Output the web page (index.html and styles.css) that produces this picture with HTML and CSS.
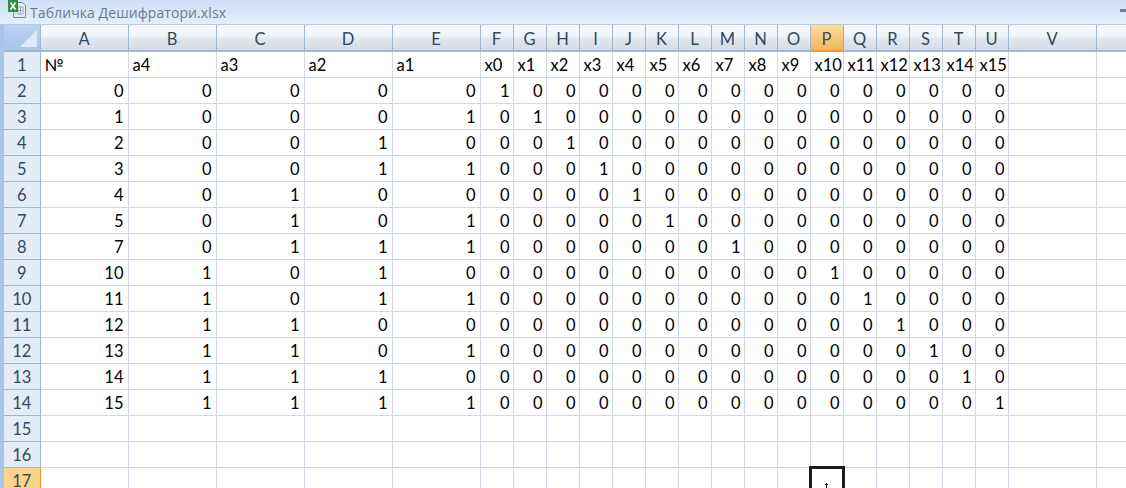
FILE: index.html
```html
<!DOCTYPE html>
<html lang="en">
<head>
    <meta charset="UTF-8">
    <title>Табличка Дешифратори.xlsx</title>
    <link rel="stylesheet" href="styles.css">
</head>
<body>
    <div class="titlebar">
        <svg class="xl-icon" width="20" height="20" viewBox="0 0 20 20">
            <path d="M6.5 2.5h9l3 3v12h-12z" fill="#e4ecf4" stroke="#6f8aa3"/>
            <path d="M11 7h5v7h-5zM11 10.500h5M13.500 7v7" fill="#fff" stroke="#8fa6bb"/>
            <path d="M5.500 13.500h8" stroke="#b9c7d4"/>
            <rect x="1" y="0" width="10" height="12" fill="#2f9140"/>
            <path d="M3.500 2.500l5 7M8.500 2.500l-5 7" stroke="#f2fff2" stroke-width="1.700"/>
        </svg>
        <span class="doc-name">Табличка Дешифратори.xlsx</span>
        <span class="min-btn"></span>
    </div>
    <div class="sheet-wrap">
    <table class="sheet">
        <colgroup>
            <col class="c-hdr">
            <col class="c-wide"><col class="c-wide"><col class="c-wide"><col class="c-wide"><col class="c-wide">
            <col class="c-x"><col class="c-x"><col class="c-x"><col class="c-x"><col class="c-x"><col class="c-x"><col class="c-x"><col class="c-x"><col class="c-x"><col class="c-x"><col class="c-x"><col class="c-x"><col class="c-x"><col class="c-x"><col class="c-x"><col class="c-x">
            <col class="c-wide"><col class="c-last">
        </colgroup>
        <tr class="col-heads">
            <th class="corner"><span class="corner-mark"></span></th>
            <th>A</th><th>B</th><th>C</th><th>D</th><th>E</th><th>F</th><th>G</th><th>H</th><th>I</th><th>J</th><th>K</th><th>L</th><th>M</th><th>N</th><th>O</th><th class="active">P</th><th>Q</th><th>R</th><th>S</th><th>T</th><th>U</th><th>V</th><th></th>
        </tr>
        <tr class="labels">
            <th>1</th>
            <td>№</td><td>a4</td><td>a3</td><td>a2</td><td>a1</td><td>x0</td><td>x1</td><td>x2</td><td>x3</td><td>x4</td><td>x5</td><td>x6</td><td>x7</td><td>x8</td><td>x9</td><td>x10</td><td>x11</td><td>x12</td><td>x13</td><td>x14</td><td>x15</td><td></td><td></td>
        </tr>
        <tr><th>2</th><td>0</td><td>0</td><td>0</td><td>0</td><td>0</td><td>1</td><td>0</td><td>0</td><td>0</td><td>0</td><td>0</td><td>0</td><td>0</td><td>0</td><td>0</td><td>0</td><td>0</td><td>0</td><td>0</td><td>0</td><td>0</td><td></td><td></td></tr>
        <tr><th>3</th><td>1</td><td>0</td><td>0</td><td>0</td><td>1</td><td>0</td><td>1</td><td>0</td><td>0</td><td>0</td><td>0</td><td>0</td><td>0</td><td>0</td><td>0</td><td>0</td><td>0</td><td>0</td><td>0</td><td>0</td><td>0</td><td></td><td></td></tr>
        <tr><th>4</th><td>2</td><td>0</td><td>0</td><td>1</td><td>0</td><td>0</td><td>0</td><td>1</td><td>0</td><td>0</td><td>0</td><td>0</td><td>0</td><td>0</td><td>0</td><td>0</td><td>0</td><td>0</td><td>0</td><td>0</td><td>0</td><td></td><td></td></tr>
        <tr><th>5</th><td>3</td><td>0</td><td>0</td><td>1</td><td>1</td><td>0</td><td>0</td><td>0</td><td>1</td><td>0</td><td>0</td><td>0</td><td>0</td><td>0</td><td>0</td><td>0</td><td>0</td><td>0</td><td>0</td><td>0</td><td>0</td><td></td><td></td></tr>
        <tr><th>6</th><td>4</td><td>0</td><td>1</td><td>0</td><td>0</td><td>0</td><td>0</td><td>0</td><td>0</td><td>1</td><td>0</td><td>0</td><td>0</td><td>0</td><td>0</td><td>0</td><td>0</td><td>0</td><td>0</td><td>0</td><td>0</td><td></td><td></td></tr>
        <tr><th>7</th><td>5</td><td>0</td><td>1</td><td>0</td><td>1</td><td>0</td><td>0</td><td>0</td><td>0</td><td>0</td><td>1</td><td>0</td><td>0</td><td>0</td><td>0</td><td>0</td><td>0</td><td>0</td><td>0</td><td>0</td><td>0</td><td></td><td></td></tr>
        <tr><th>8</th><td>7</td><td>0</td><td>1</td><td>1</td><td>1</td><td>0</td><td>0</td><td>0</td><td>0</td><td>0</td><td>0</td><td>0</td><td>1</td><td>0</td><td>0</td><td>0</td><td>0</td><td>0</td><td>0</td><td>0</td><td>0</td><td></td><td></td></tr>
        <tr><th>9</th><td>10</td><td>1</td><td>0</td><td>1</td><td>0</td><td>0</td><td>0</td><td>0</td><td>0</td><td>0</td><td>0</td><td>0</td><td>0</td><td>0</td><td>0</td><td>1</td><td>0</td><td>0</td><td>0</td><td>0</td><td>0</td><td></td><td></td></tr>
        <tr><th>10</th><td>11</td><td>1</td><td>0</td><td>1</td><td>1</td><td>0</td><td>0</td><td>0</td><td>0</td><td>0</td><td>0</td><td>0</td><td>0</td><td>0</td><td>0</td><td>0</td><td>1</td><td>0</td><td>0</td><td>0</td><td>0</td><td></td><td></td></tr>
        <tr><th>11</th><td>12</td><td>1</td><td>1</td><td>0</td><td>0</td><td>0</td><td>0</td><td>0</td><td>0</td><td>0</td><td>0</td><td>0</td><td>0</td><td>0</td><td>0</td><td>0</td><td>0</td><td>1</td><td>0</td><td>0</td><td>0</td><td></td><td></td></tr>
        <tr><th>12</th><td>13</td><td>1</td><td>1</td><td>0</td><td>1</td><td>0</td><td>0</td><td>0</td><td>0</td><td>0</td><td>0</td><td>0</td><td>0</td><td>0</td><td>0</td><td>0</td><td>0</td><td>0</td><td>1</td><td>0</td><td>0</td><td></td><td></td></tr>
        <tr><th>13</th><td>14</td><td>1</td><td>1</td><td>1</td><td>0</td><td>0</td><td>0</td><td>0</td><td>0</td><td>0</td><td>0</td><td>0</td><td>0</td><td>0</td><td>0</td><td>0</td><td>0</td><td>0</td><td>0</td><td>1</td><td>0</td><td></td><td></td></tr>
        <tr><th>14</th><td>15</td><td>1</td><td>1</td><td>1</td><td>1</td><td>0</td><td>0</td><td>0</td><td>0</td><td>0</td><td>0</td><td>0</td><td>0</td><td>0</td><td>0</td><td>0</td><td>0</td><td>0</td><td>0</td><td>0</td><td>1</td><td></td><td></td></tr>
        <tr><th>15</th><td></td><td></td><td></td><td></td><td></td><td></td><td></td><td></td><td></td><td></td><td></td><td></td><td></td><td></td><td></td><td></td><td></td><td></td><td></td><td></td><td></td><td></td><td></td></tr>
        <tr><th>16</th><td></td><td></td><td></td><td></td><td></td><td></td><td></td><td></td><td></td><td></td><td></td><td></td><td></td><td></td><td></td><td></td><td></td><td></td><td></td><td></td><td></td><td></td><td></td></tr>
        <tr><th class="active">17</th><td></td><td></td><td></td><td></td><td></td><td></td><td></td><td></td><td></td><td></td><td></td><td></td><td></td><td></td><td></td><td></td><td></td><td></td><td></td><td></td><td></td><td></td><td></td></tr>
    </table>
    </div>
    <div class="cell-cursor"><span class="cursor-cross"></span></div>
</body>
</html>
```
FILE: styles.css
```css
html, body { margin: 0; height: 100%; overflow: hidden; }
body {
    width: 1126px;
    height: 488px;
    position: relative;
    background: #fff;
    font-family: "Open Sans", "Noto Sans", sans-serif;
}

.titlebar {
    height: 24px;
    display: flex;
    align-items: center;
    gap: 3px;
    padding-left: 7px;
    background: linear-gradient(#cfdff5, #e3effb);
    border-bottom: 1px solid #a9cdf0;
}
.xl-icon { margin-top: -5px; }
.doc-name { font-size: 14px; letter-spacing: 0.08px; color: #6b7a8c; }
.min-btn { width: 6px; height: 3px; margin-left: auto; margin-top: -4px; background: #6f7d8c; }

.sheet-wrap {
    height: 463px;
    padding-left: 4px;
    overflow: hidden;
    background: linear-gradient(90deg, #a9c5eb 4px, #fff 4px);
}
.sheet {
    border-collapse: collapse;
    table-layout: fixed;
    width: 1122px;
    font-family: Lato, "Open Sans", sans-serif;
    font-size: 16.500px;
    color: #000;
}
.c-hdr { width: 36px; }
.c-wide { width: 88px; }
.c-x { width: 33px; }
.c-last { width: 30px; }

.sheet tr { height: 26px; }
.sheet th, .sheet td { padding: 2px 0 0; overflow: hidden; white-space: nowrap; }
.sheet td {
    border-right: 1px solid #d0d7e5;
    border-bottom: 1px solid #d0d7e5;
    padding-right: 4px;
    text-align: right;
}
/* the narrow x0..x15 columns sit closer to their right line */
.sheet td:nth-child(n+7):nth-child(-n+22) { padding-right: 3px; }
.sheet .labels td, .sheet .labels td:nth-child(n+7):nth-child(-n+22) { text-align: left; padding: 2px 0 0 4px; }

.sheet th {
    font-weight: 400;
    color: #2f4a5f;
    background: #e4ecf7;
    border-right: 1px solid #9eb6ce;
    border-bottom: 1px solid #9eb6ce;
    text-align: center;
}
.col-heads th {
    background: linear-gradient(#f8fafc 0%, #eef2f7 45%, #dfe5ed 60%, #d3dbe6 100%);
    border-bottom: 2px solid #9eb6ce;
}
.sheet th.active {
    background: linear-gradient(#f9dda0, #f1b65a);
    border-color: #f29536;
    color: #3a4a56;
}
.sheet tr:last-child th.active { background: #fcd28c; }
.sheet th.corner {
    background: linear-gradient(#bcd2ee, #a9c5eb);
    position: relative;
}
.corner-mark {
    position: absolute;
    right: 3px;
    bottom: 3px;
    border-style: solid;
    border-width: 0 0 17px 17px;
    border-color: transparent transparent #e0e9f6 transparent;
}

.cell-cursor {
    position: absolute;
    left: 809px;
    top: 466px;
    width: 30px;
    height: 30px;
    border: 3px solid #1b1b1b;
}
.cursor-cross {
    position: absolute;
    left: 14px;
    top: 14px;
    width: 1px;
    height: 8px;
    background: #111;
}
.cursor-cross::before {
    content: "";
    position: absolute;
    left: -1px;
    top: 1px;
    width: 3px;
    height: 1px;
    background: #111;
}
```
